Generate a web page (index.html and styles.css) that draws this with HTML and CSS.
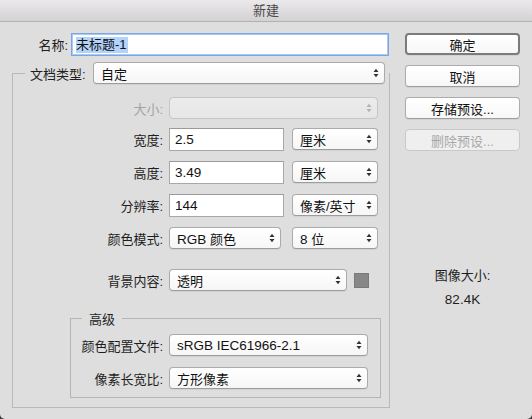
FILE: index.html
```html
<!DOCTYPE html>
<html lang="zh-CN">
<head>
<meta charset="utf-8">
<title>新建</title>
<link rel="stylesheet" href="styles.css">
</head>
<body>
<div class="dialog">
  <div class="titlebar">新建</div>
  <div class="main">
    <div class="left">
      <div class="name-row">
        <span class="lbl name-lbl">名称:</span>
        <div class="field name-field"><span class="selected">未标题-1</span></div>
      </div>

      <div class="group">
        <div class="legend doc-legend">
          <span class="doc-lbl">文档类型:</span>
          <div class="popup w-doc"><span>自定</span><svg class="arr" width="6" height="10" viewBox="0 0 6 10"><path d="M0.5 4 L3 0.8 L5.5 4Z M0.5 6 L3 9.2 L5.5 6Z"/></svg></div>
        </div>

        <div class="row r-size">
          <span class="lbl dis">大小:</span>
          <div class="popup disabled w-size"><span></span><svg class="arr" width="6" height="10" viewBox="0 0 6 10"><path d="M0.5 4 L3 0.8 L5.5 4Z M0.5 6 L3 9.2 L5.5 6Z"/></svg></div>
        </div>

        <div class="row r-width tall">
          <span class="lbl">宽度:</span>
          <div class="field w-num"><span class="lat">2.5</span></div>
          <div class="popup w-unit"><span>厘米</span><svg class="arr" width="6" height="10" viewBox="0 0 6 10"><path d="M0.5 4 L3 0.8 L5.5 4Z M0.5 6 L3 9.2 L5.5 6Z"/></svg></div>
        </div>

        <div class="row r-next tall">
          <span class="lbl">高度:</span>
          <div class="field w-num"><span class="lat">3.49</span></div>
          <div class="popup w-unit"><span>厘米</span><svg class="arr" width="6" height="10" viewBox="0 0 6 10"><path d="M0.5 4 L3 0.8 L5.5 4Z M0.5 6 L3 9.2 L5.5 6Z"/></svg></div>
        </div>

        <div class="row r-next tall">
          <span class="lbl">分辨率:</span>
          <div class="field w-num"><span class="lat">144</span></div>
          <div class="popup w-unit"><span>像素/英寸</span><svg class="arr" width="6" height="10" viewBox="0 0 6 10"><path d="M0.5 4 L3 0.8 L5.5 4Z M0.5 6 L3 9.2 L5.5 6Z"/></svg></div>
        </div>

        <div class="row r-next">
          <span class="lbl">颜色模式:</span>
          <div class="popup w-mode"><span><span class="lat">RGB</span> 颜色</span><svg class="arr" width="6" height="10" viewBox="0 0 6 10"><path d="M0.5 4 L3 0.8 L5.5 4Z M0.5 6 L3 9.2 L5.5 6Z"/></svg></div>
          <div class="popup w-bits"><span><span class="lat">8</span> 位</span><svg class="arr" width="6" height="10" viewBox="0 0 6 10"><path d="M0.5 4 L3 0.8 L5.5 4Z M0.5 6 L3 9.2 L5.5 6Z"/></svg></div>
        </div>

        <div class="row r-bg">
          <span class="lbl">背景内容:</span>
          <div class="popup w-bgc"><span>透明</span><svg class="arr" width="6" height="10" viewBox="0 0 6 10"><path d="M0.5 4 L3 0.8 L5.5 4Z M0.5 6 L3 9.2 L5.5 6Z"/></svg></div>
          <div class="swatch"></div>
        </div>

        <div class="group adv">
          <div class="legend adv-legend">高级</div>
          <div class="row adv-row1">
            <span class="lbl adv-lbl">颜色配置文件:</span>
            <div class="popup w-adv"><span class="lat">sRGB IEC61966-2.1</span><svg class="arr" width="6" height="10" viewBox="0 0 6 10"><path d="M0.5 4 L3 0.8 L5.5 4Z M0.5 6 L3 9.2 L5.5 6Z"/></svg></div>
          </div>
          <div class="row adv-row2">
            <span class="lbl adv-lbl">像素长宽比:</span>
            <div class="popup w-adv"><span>方形像素</span><svg class="arr" width="6" height="10" viewBox="0 0 6 10"><path d="M0.5 4 L3 0.8 L5.5 4Z M0.5 6 L3 9.2 L5.5 6Z"/></svg></div>
          </div>
        </div>
      </div>
    </div>

    <div class="right">
      <div class="btn ok">确定</div>
      <div class="btn">取消</div>
      <div class="btn">存储预设...</div>
      <div class="btn disabled">删除预设...</div>
      <div class="imgsize">
        <div>图像大小:</div>
        <div class="lat imgval">82.4K</div>
      </div>
    </div>
  </div>
</div>
</body>
</html>
```

FILE: styles.css
```css
html {
  background: #3c3c3c;
}
body {
  margin: 0;
  font-family: "Liberation Sans", "Noto Sans CJK SC", sans-serif;
  font-size: 13px;
  color: #1e1e1e;
}
.dialog {
  width: 532px;
  height: 419px;
  background: #dedede;
  border-radius: 0 0 5px 5px;
  overflow: hidden;
}
.titlebar {
  height: 21px;
  line-height: 21px;
  text-align: center;
  color: #4a4a4a;
  background: linear-gradient(#ebe9eb, #d3d1d3);
  border-bottom: 1px solid #b2b2b2;
}
.main {
  display: flex;
}
.left {
  width: 378px;
  margin-left: 12px;
}
.lat {
  font-size: 13.5px;
}
.name-row {
  display: flex;
  margin-top: 11px;
  height: 23px;
  gap: 3px;
}
.lbl {
  display: flex;
  align-items: center;
  justify-content: flex-end;
  white-space: nowrap;
}
.name-lbl {
  width: 56px;
}
.field {
  box-sizing: border-box;
  height: 23px;
  background: #fff;
  border: 1px solid #a8a8a8;
  border-top-color: #9a9a9a;
  display: flex;
  align-items: center;
  padding-left: 4px;
  color: #111;
}
.name-field {
  width: 318px;
  border: 1px solid #7aa6e6;
  box-shadow: inset 0 0 0 1px #a9c9f3;
  padding-left: 4px;
}
.selected {
  background: #b3d3fb;
  line-height: 16px;
  padding-right: 1px;
}
.group {
  border: 1px solid #b9b9b9;
  margin-top: 17px;
  display: flex;
  flex-direction: column;
}
.legend {
  background: #dedede;
}
.doc-legend {
  display: flex;
  align-items: center;
  height: 22px;
  margin-top: -12px;
  margin-left: 12px;
  padding-left: 5px;
  gap: 7px;
}
.doc-lbl {
  width: 56px;
  white-space: nowrap;
}
.popup {
  box-sizing: border-box;
  height: 22px;
  border: 1px solid #ababab;
  border-bottom-color: #9c9c9c;
  border-radius: 4px;
  background: linear-gradient(#ffffff, #f6f6f6);
  box-shadow: 0 1px 1px rgba(0, 0, 0, 0.06);
  display: flex;
  align-items: center;
  padding-left: 7px;
  padding-right: 5px;
  white-space: nowrap;
  color: #111;
}
.popup .arr {
  margin-left: auto;
  fill: #333;
  flex: none;
}
.popup.disabled {
  background: linear-gradient(#ececec, #e6e6e6);
  border-color: #c6c6c6;
  box-shadow: none;
}
.popup.disabled .arr {
  fill: #b2b2b2;
}
.w-doc { width: 292px; }
.w-size { width: 209px; }
.w-num { width: 115px; padding-left: 5px; }
.w-unit { width: 86px; }
.w-mode { width: 112px; }
.w-bits { width: 86px; }
.w-bgc { width: 178px; }
.w-adv { width: 199px; }

.row {
  display: flex;
  align-items: flex-start;
  height: 22px;
}
.row.tall {
  height: 23px;
}
.row > .lbl {
  width: 150px;
  height: 100%;
  margin-right: 6px;
}
.row .w-unit,
.row .w-bits {
  margin-left: 8px;
}
.row .w-bits {
  margin-left: 11px;
}
.dis {
  color: #a3a3a3;
}
.r-size { margin-top: 13px; }
.r-width { margin-top: 9px; }
.r-next { margin-top: 10px; }
.r-bg { margin-top: 20px; }
.swatch {
  box-sizing: border-box;
  width: 15px;
  height: 15px;
  margin-left: 7px;
  align-self: center;
  background: #878787;
  border: 1px solid #7a7a7a;
}
.adv {
  margin: 27px 8px 9px 57px;
  padding-bottom: 8px;
  border-color: #b5b5b5;
}
.adv-legend {
  align-self: flex-start;
  margin-top: -8px;
  margin-left: 11px;
  padding: 0 7px;
  line-height: 18px;
  height: 18px;
}
.row > .adv-lbl {
  width: 92px;
}
.adv-row1 { margin-top: 5px; }
.adv-row2 { margin-top: 11px; }

.right {
  width: 115px;
  margin-left: 15px;
  padding-top: 11px;
  display: flex;
  flex-direction: column;
  gap: 10px;
}
.btn {
  box-sizing: border-box;
  height: 22px;
  border: 1px solid #acacac;
  border-bottom-color: #9e9e9e;
  border-radius: 4px;
  background: linear-gradient(#ffffff, #f7f7f7);
  box-shadow: 0 1px 1px rgba(0, 0, 0, 0.06);
  display: flex;
  align-items: center;
  justify-content: center;
  color: #111;
}
.btn.ok {
  border: 2px solid #7b7b7b;
}
.btn.disabled {
  background: #efefef;
  border-color: #c9c9c9;
  color: #a8a8a8;
  box-shadow: none;
}
.imgsize {
  margin-top: 107px;
  display: flex;
  flex-direction: column;
  align-items: center;
  gap: 8px;
  line-height: 16px;
}
```
